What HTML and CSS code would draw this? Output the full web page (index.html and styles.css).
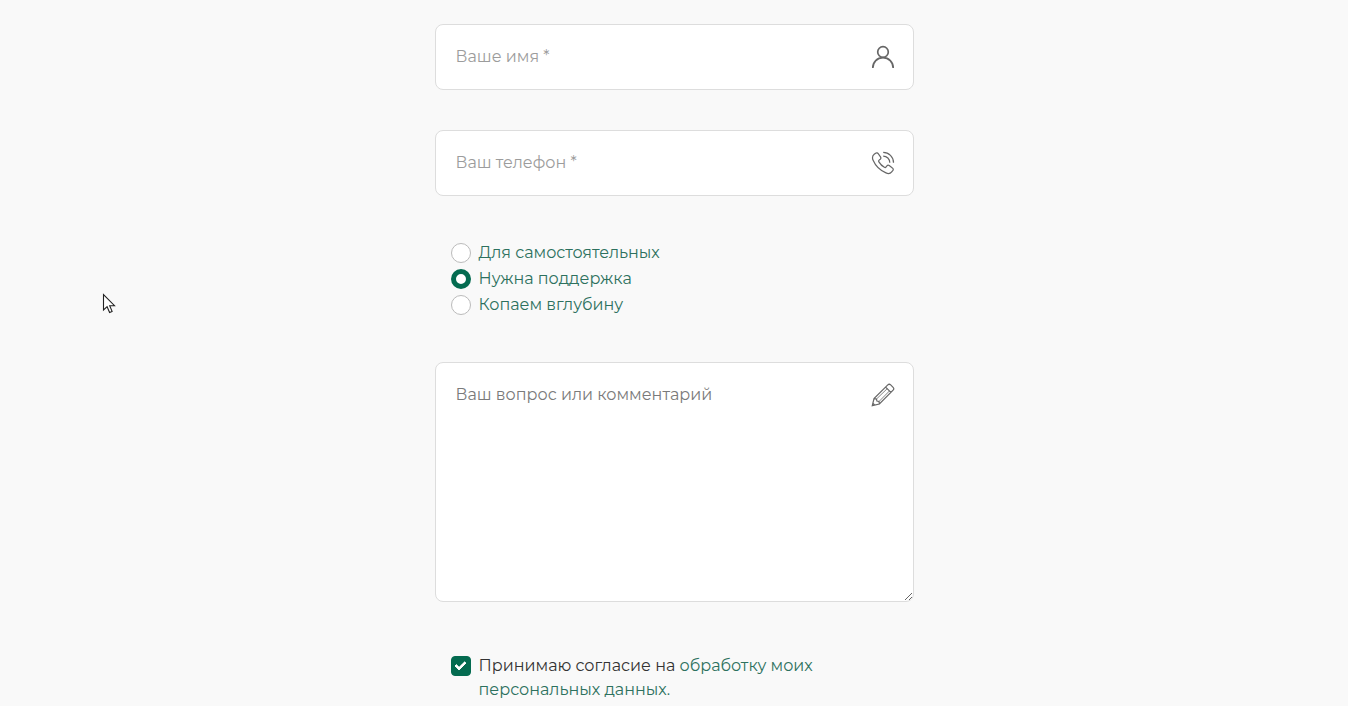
FILE: index.html
```
<!DOCTYPE html>
<html lang="ru">
<head>
<meta charset="utf-8">
<meta name="viewport" content="width=device-width, initial-scale=1">
<title>Форма заявки</title>
<link rel="stylesheet" href="styles.css">
</head>
<body>
<form class="form">
  <div class="field">
    <input class="control" type="text" placeholder="Ваше имя *" aria-label="Ваше имя">
    <svg class="icon" viewBox="0 0 24 24" aria-hidden="true"><circle cx="12" cy="7" r="5.3"/><path d="M1.800 23c0-6 4.400-10.400 10.200-10.400S22.200 17 22.200 23"/></svg>
  </div>
  <div class="field">
    <input class="control" type="tel" placeholder="Ваш телефон *" aria-label="Ваш телефон">
    <svg class="icon icon-thin" viewBox="0 0 24 24" aria-hidden="true"><path d="M3.200 3.300 4.600 2.200C5.500 1.500 6.600 1.800 7.200 2.600L9.500 5.800C10.100 6.700 9.900 7.600 9.200 8.200L8.100 9.100C7.500 9.600 7.500 10.200 7.900 10.900 9.200 13.100 11.200 15.100 13.400 16.300 14.100 16.700 14.700 16.500 15.100 15.900L15.900 14.900C16.500 14.200 17.400 14 18.200 14.600L21.400 16.900C22.300 17.500 22.500 18.600 21.900 19.400L20.700 20.900C19.400 22.500 17.200 22.900 15 21.900 9.400 19.600 4.400 14.600 2.100 9.300 1.100 7 1.500 4.700 3.200 3.300Z"/><path d="M12.200 1.400C17.900 1.400 22.500 6 22.500 11.700M12.200 5.100C15.900 5.100 18.800 8 18.800 11.700"/></svg>
  </div>
  <div class="options" role="radiogroup" aria-label="Тариф">
    <label class="option"><input class="mark radio" type="radio" name="plan"><span>Для самостоятельных</span></label>
    <label class="option"><input class="mark radio" type="radio" name="plan" checked><span>Нужна поддержка</span></label>
    <label class="option"><input class="mark radio" type="radio" name="plan"><span>Копаем вглубину</span></label>
  </div>
  <div class="field">
    <textarea class="control message" placeholder="Ваш вопрос или комментарий" aria-label="Ваш вопрос или комментарий"></textarea>
    <svg class="icon icon-thin" viewBox="0 0 24 24" aria-hidden="true"><path d="M1.300 22.700 3 15.600 16.800 1.900Q18.200.600 19.700 1.900L22.100 4.300Q23.500 5.800 22.100 7.200L8.400 21ZM3 15.600 5.500 16 5.900 18.100 8 18.500 8.400 21M14.600 4.100 19.900 9.400M1.900 20.200 3.800 22.100"/><path stroke-width=".8" d="M5.500 16 16.200 5.700M8 18.500 18.400 8"/></svg>
  </div>
  <div class="consent">
    <input class="mark check" id="consent" type="checkbox" checked>
    <label for="consent">Принимаю согласие на <a class="link" href="#">обработку моих персональных данных.</a></label>
  </div>
</form>
<svg class="cursor" viewBox="0 0 14 22" aria-hidden="true"><path d="M1.500 1.500V17L5.100 13.700 7.600 19.500 10.100 18.400 7.700 12.700H12.500Z"/></svg>
</body>
</html>
```
FILE: styles.css
```
*, *::before, *::after {
  box-sizing: border-box;
}

body {
  margin: 0;
  padding: 24px 16px 4px;
  background: #f9f9f9;
  color: #333;
  font: 400 16px/24px Montserrat, Inter, "Noto Sans", sans-serif;
}

.form {
  max-width: 479px;
  margin: 0 auto;
}

.field {
  display: grid;
}

.field + .field {
  margin-top: 40px;
}

.control {
  grid-area: 1 / 1;
  width: 100%;
  height: 66px;
  padding: 19px 56px 21px 20px;
  border: 1px solid #ddd;
  border-radius: 8px;
  background: #fff;
  color: #333;
  font: inherit;
}

.control::placeholder {
  color: #9c9c9c;
  opacity: 1;
}

.message {
  display: block;
  height: 240px;
  padding-top: 20px;
  resize: vertical;
}

.message::placeholder {
  color: #7a7a7a;
}

.icon {
  grid-area: 1 / 1;
  justify-self: end;
  width: 24px;
  height: 24px;
  margin: 21px 19px 0 0;
  fill: none;
  stroke: #666;
  stroke-width: 1.7;
  pointer-events: none;
}

.icon-thin {
  stroke-width: 1.2;
}

.options {
  display: grid;
  margin: 44px 16px;
}

.option {
  display: flex;
  align-items: center;
  gap: 8px;
  height: 26px;
  color: #2d715e;
}

.mark {
  flex: none;
  appearance: none;
  width: 20px;
  height: 20px;
  margin: 0;
  border: 1px solid #bbb;
  background: #fff;
}

.radio {
  border-radius: 50%;
}

.radio:checked {
  border: 5px solid #046b50;
}

.consent {
  display: flex;
  gap: 8px;
  max-width: 400px;
  margin: 52px 16px 0;
}

.check {
  display: grid;
  place-items: center;
  margin-top: 2px;
  border-radius: 4px;
}

.check:checked {
  border-color: #046b50;
  background: #046b50;
}

.check:checked::before {
  content: "";
  width: 11px;
  height: 7px;
  margin-bottom: 3px;
  border: solid #fff;
  border-width: 0 0 3px 3px;
  border-radius: 1px;
  transform: rotate(-45deg);
}

.link {
  color: #2d715e;
  text-decoration: none;
}

.cursor {
  position: absolute;
  top: 293px;
  left: 102px;
  width: 14px;
  height: 22px;
  fill: #fff;
  stroke: #222;
  stroke-width: 1.1;
  pointer-events: none;
}
```
